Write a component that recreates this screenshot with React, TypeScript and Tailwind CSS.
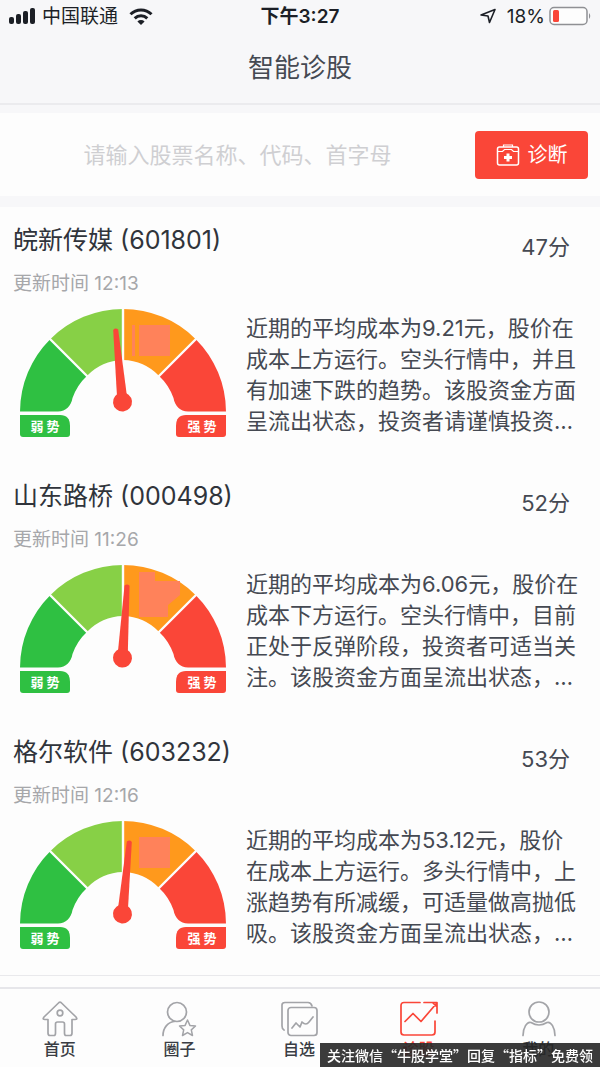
import type { ReactNode } from "react";

interface Stock {
  name: string;
  code: string;
  score: number;
  updatedAt: string;
  summary: string;
  shade: string;
}

const STOCKS: Stock[] = [
  {
    name: "皖新传媒",
    code: "601801",
    score: 47,
    updatedAt: "12:13",
    summary:
      "近期的平均成本为9.21元，股价在成本上方运行。空头行情中，并且有加速下跌的趋势。该股资金方面呈流出状态，投资者请谨慎投资…",
    shade: "M119 16H150V47H119ZM112 16H115V47H112Z",
  },
  {
    name: "山东路桥",
    code: "000498",
    score: 52,
    updatedAt: "11:26",
    summary:
      "近期的平均成本为6.06元，股价在成本下方运行。空头行情中，目前正处于反弹阶段，投资者可适当关注。该股资金方面呈流出状态，…",
    shade: "M119 7H135V16H160V30L148 40V52H119Z",
  },
  {
    name: "格尔软件",
    code: "603232",
    score: 53,
    updatedAt: "12:16",
    summary:
      "近期的平均成本为53.12元，股价在成本上方运行。多头行情中，上涨趋势有所减缓，可适量做高抛低吸。该股资金方面呈流出状态，…",
    shade: "M119 16H150V47H119Z",
  },
];

function StatusBar() {
  return (
    <div className="grid h-8 grid-cols-3 items-center pr-2 pl-2 text-[19px] leading-none text-[#1c1f26]">
      <div className="flex items-center gap-1.5">
        <svg width="28" height="17" viewBox="0 0 28 17" fill="currentColor" aria-hidden="true">
          <rect x="1" y="9" width="5" height="7" rx="2" />
          <rect x="8" y="6" width="5" height="10" rx="2" />
          <rect x="15" y="3" width="5" height="13" rx="2" />
          <rect x="22" y="0" width="5" height="16" rx="2" />
        </svg>
        <span>中国联通</span>
        <svg className="ml-1" width="26" height="18" viewBox="0 0 26 18" fill="none" stroke="currentColor" strokeWidth="3" aria-hidden="true">
          <path d="M2.5 7.2a15 15 0 0 1 21 0" />
          <path d="M6.7 11.4a9 9 0 0 1 12.6 0" />
          <path d="M13 18l-3.6-3.6a5.2 5.2 0 0 1 7.2 0z" fill="currentColor" stroke="none" />
        </svg>
      </div>
      <div className="text-center font-semibold">下午3:27</div>
      <div className="flex items-center justify-end gap-1">
        <svg className="mr-1.5" width="18" height="18" viewBox="0 0 18 18" fill="none" stroke="currentColor" strokeWidth="1.6" strokeLinejoin="round" aria-hidden="true">
          <path d="M16 2.500L2 8l7 1 1.500 6.500z" />
        </svg>
        <span>18%</span>
        <svg width="43" height="20" viewBox="0 0 43 20" aria-hidden="true">
          <rect x="1" y="1.500" width="37" height="17" rx="4" fill="#fdfdfd" stroke="#8f9094" strokeWidth="1.500" />
          <rect x="4" y="4" width="6" height="12" rx="1.500" fill="#fa4638" />
          <path d="M40 7q2.500 3 0 6z" fill="#8f9094" />
        </svg>
      </div>
    </div>
  );
}

function SearchBar() {
  return (
    <form className="flex h-[83px] items-center bg-[#fdfdfd] pr-3" onSubmit={(e) => e.preventDefault()}>
      <input
        type="text"
        aria-label="股票搜索"
        placeholder="请输入股票名称、代码、首字母"
        className="h-12 min-w-0 flex-1 bg-transparent text-center text-[22px] text-gray-800 outline-none placeholder:text-[#cfcfd2]"
      />
      <button
        type="submit"
        className="flex h-12 w-[113px] shrink-0 items-center justify-center gap-2 rounded-sm bg-[#fa4638] text-[20px] text-white"
      >
        <svg width="24" height="24" viewBox="0 0 24 24" fill="none" stroke="currentColor" strokeWidth="1.500" aria-hidden="true">
          <rect x="1.500" y="4" width="21" height="18" rx="2" />
          <path d="M1.500 8.500h5l2-2h7l2 2h5M7.500 4V2h9v2" strokeWidth="1.200" />
          <path d="M12 10.500v8M8 14.500h8" strokeWidth="3" />
        </svg>
        诊断
      </button>
    </form>
  );
}

function Gauge({ score, shade }: { score: number; shade: string }) {
  // 50 points straight up, 1.8 degrees per point
  const angle = (score - 50) * 1.8;
  return (
    <svg
      className="shrink-0"
      width="206"
      height="128"
      viewBox="0 0 206 128"
      role="img"
      aria-label={`${score}分`}
    >
      <path d="M0 102.500A103 103 0 0 1 30.200 30.200L66.900 66.900Q57 76 52.500 89C51 97 46 102.500 38 102.500Z" fill="#2fc042" />
      <path d="M30.200 30.200A103 103 0 0 1 103 0V51A52 52 0 0 0 66.900 66.900Z" fill="#87d046" />
      <path d="M103 0A103 103 0 0 1 175.800 30.200L139.100 66.900A52 52 0 0 0 103 51Z" fill="#ff991c" />
      <path d={shade} fill="#ff825a" />
      <path d="M206 102.500A103 103 0 0 0 175.800 30.200L139.100 66.900Q149 76 153.500 89C155 97 160 102.500 168 102.500Z" fill="#fa4638" />
      <path d="M103 0V52M29 29L68 68M177 29L138 68" stroke="#fdfdfd" strokeWidth="2.400" />
      <g transform={`rotate(${angle} 102.500 93)`} fill="#fa4638">
        <path d="M100 20.500Q102.500 18 105 20.500L107.500 88H97.500Z" />
        <circle cx="102.500" cy="93" r="9.500" />
      </g>
      <path d="M0 106H40Q50 106 50 117V125Q50 128 47 128H3Q0 128 0 125Z" fill="#2fc042" />
      <path d="M206 106H166Q156 106 156 117V125Q156 128 159 128H203Q206 128 206 125Z" fill="#fa4638" />
      <g fill="#fff" fontSize="13" fontWeight="700" textAnchor="middle">
        <text x="25" y="122">弱 势</text>
        <text x="182" y="122">强 势</text>
      </g>
    </svg>
  );
}

function StockCard({ stock }: { stock: Stock }) {
  return (
    <article className="h-64 pt-4 pl-3">
      <div className="flex justify-between pr-[30px]">
        <div className="pt-px pl-px">
          <h2 className="text-[25px] leading-8 text-[#30343b]">
            {stock.name} ({stock.code})
          </h2>
          <p className="mt-3 text-[19px] leading-8 text-[#a6a7aa]">更新时间 {stock.updatedAt}</p>
        </div>
        <span className="pt-2 text-[22px] leading-8 text-[#454952]">{stock.score}分</span>
      </div>
      <div className="mt-[9px] flex pr-4 pl-2">
        <Gauge score={stock.score} shade={stock.shade} />
        <p className="mt-1 ml-5 flex-1 text-[22px] leading-[31px] text-[#454952]">{stock.summary}</p>
      </div>
    </article>
  );
}

function TabItem({ label, active, children }: { label: string; active?: boolean; children: ReactNode }) {
  return (
    <a
      href="#"
      aria-current={active ? "page" : undefined}
      className={`flex flex-1 flex-col items-center pt-3 text-[16px] leading-[22px] font-medium ${active ? "text-[#fa4638]" : "text-[#3a3d44]"}`}
    >
      <svg
        width="38"
        height="37"
        viewBox="0 0 38 37"
        fill="none"
        stroke={active ? "#fa4638" : "#a3a4a8"}
        strokeWidth="1.700"
        strokeLinejoin="round"
        strokeLinecap="round"
        aria-hidden="true"
      >
        {children}
      </svg>
      {label}
    </a>
  );
}

function TabBar() {
  return (
    <nav className="sticky bottom-0 mt-auto flex h-20 border-t-2 border-[#e6e6ea] bg-[#fdfdfd] pr-0.5">
      <TabItem label="首页">
        <path d="M18 1.500Q19 .8 20 1.500L35 16Q37 18.500 34 18.500H31V32Q31 34.500 29 34.500H25Q23.500 34.500 23.500 32V23Q23.500 21 21.500 21H16.500Q14.500 21 14.500 23V32Q14.500 34.500 13 34.500H9Q7 34.500 7 32V18.500H4Q1 18.500 3 16Z" />
        <circle cx="19" cy="12" r="2.800" />
      </TabItem>
      <TabItem label="圈子">
        <circle cx="17" cy="11" r="9.500" />
        <path d="M3 34.500C3 27 8 21 14 20.500" />
        <path d="M27.500 19l2.400 5.400 5.600.6-4.200 3.900 1.200 5.600-5-2.900-5 2.900 1.200-5.600-4.200-3.900 5.600-.6z" strokeWidth="1.500" />
      </TabItem>
      <TabItem label="自选">
        <path d="M4 29Q2 28 2 25V4Q2 1.500 5 1.500H28Q31 1.500 32 5" />
        <rect x="8" y="6.500" width="29" height="28" rx="3" />
        <path d="M12 27l4-5 4 4 2-5q4 4 7 0l4-5" />
      </TabItem>
      <TabItem label="诊股" active>
        <path d="M20 1.500H4Q1 1.500 1 4.500V31Q1 34 4 34H32Q35 34 35 31V20" />
        <path d="M5 20.500l8-8 8 8L36 3M24 1.500H37V12M33 2L37 6" />
      </TabItem>
      <TabItem label="我的">
        <circle cx="20" cy="11" r="10" />
        <path d="M4 34.500C4 27 8 20 12 21.500Q20 26.500 28 21.500C32 20 36 27 36 34.500" />
      </TabItem>
    </nav>
  );
}

export default function App() {
  return (
    <div className="relative flex min-h-screen flex-col bg-[#fdfdfd] font-['Inter','Noto_Sans_CJK_SC',sans-serif]" lang="zh-CN">
      <header className="border-b-2 border-[#ebebee] bg-[#f7f7f9]">
        <StatusBar />
        <h1 className="flex h-[71px] items-center justify-center text-[26px] text-[#454952]">智能诊股</h1>
      </header>
      <main className="border-b border-[#e9e9ec]">
        <div className="border-t-8 border-b-[11px] border-[#f7f7f9]">
          <SearchBar />
        </div>
        {STOCKS.map((stock) => (
          <StockCard key={stock.code} stock={stock} />
        ))}
      </main>
      <TabBar />
      <div className="fixed right-0 bottom-0 flex h-6 items-center bg-[#262626]/90 px-[7px] font-['Noto_Sans_CJK_SC',sans-serif] text-[14px] font-medium whitespace-nowrap text-white">
        关注微信“牛股学堂”回复“指标”免费领
      </div>
    </div>
  );
}
